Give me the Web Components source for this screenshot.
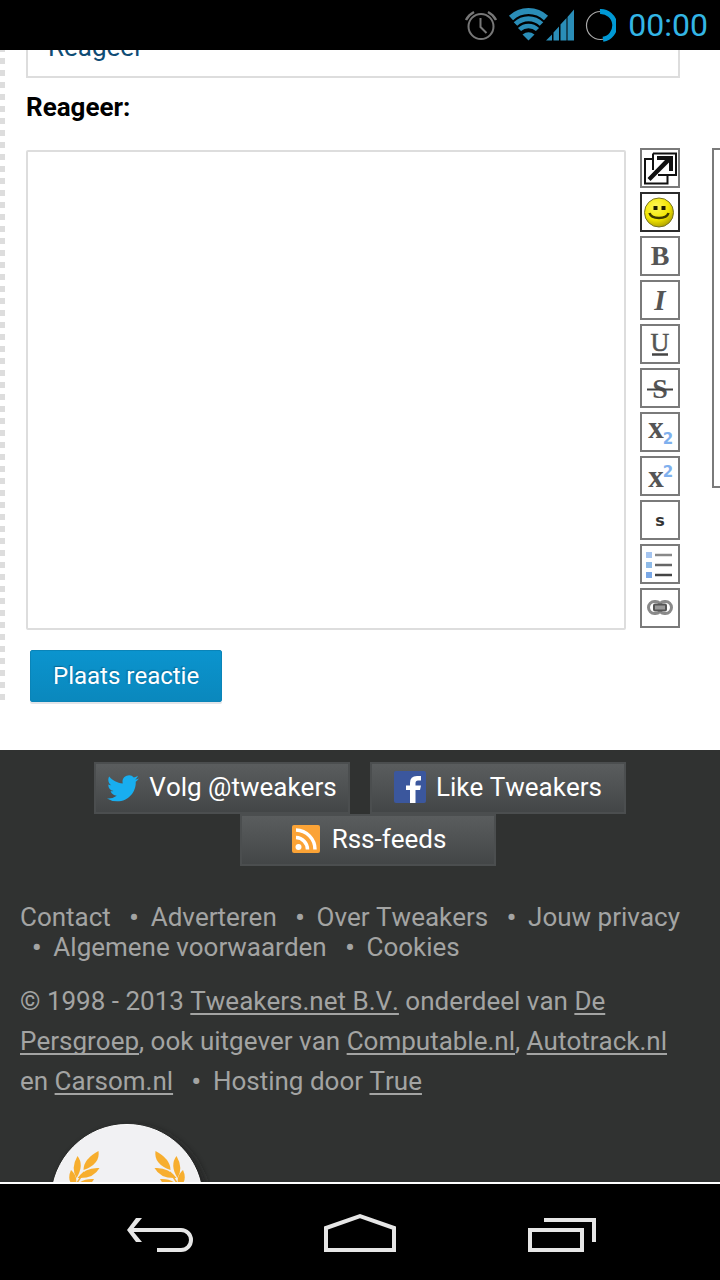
<!DOCTYPE html>
<html lang="nl">
<head>
<meta charset="utf-8">
<meta name="viewport" content="width=device-width, initial-scale=1">
<title>Tweakers</title>
<style>
  body {
    margin: 0;
    font-family: Roboto, "Liberation Sans", sans-serif;
    font-size: 26px;
    font-kerning: none;
  }
</style>
</head>
<body>
<phone-screen>
  <status-bar slot="status">00:00</status-bar>
  <reaction-form></reaction-form>
  <site-footer></site-footer>
  <nav-bar slot="nav"></nav-bar>
</phone-screen>

<script>
class PhoneScreen extends HTMLElement {
  constructor() {
    super();
    this.attachShadow({ mode: 'open' });
  }

  connectedCallback() {
    this.shadowRoot.innerHTML = `
      <style>
        :host {
          display: flex;
          flex-direction: column;
          height: 100vh;
          background: #fff;
        }

        .page {
          flex: 1;
          min-height: 0;
          display: flex;
          flex-direction: column;
          overflow: hidden;
        }
      </style>

      <slot name="status"></slot>
      <div class="page"><slot></slot></div>
      <slot name="nav"></slot>
    `;
  }
}

class StatusBar extends HTMLElement {
  constructor() {
    super();
    this.attachShadow({ mode: 'open' });
  }

  connectedCallback() {
    this.shadowRoot.innerHTML = `
      <style>
        :host {
          display: flex;
          flex: none;
          align-items: center;
          justify-content: flex-end;
          height: 50px;
          padding-right: 12px;
          background: #000;
          color: #33b5e5;
          font-size: 32px;
        }

        svg {
          display: block;
          margin-right: 12px;
        }
      </style>

      <svg width="152" height="50" viewBox="464 0 152 50" aria-hidden="true">
        <g fill="none" stroke="#777" stroke-width="2">
          <circle cx="481" cy="26.500" r="12.500"/>
          <path d="M480.500 18v9l6 6"/>
          <path d="M466 20a19 19 0 0 1 8-8M496 20a19 19 0 0 0-8-8" stroke-width="2.500"/>
        </g>
        <g fill="none" stroke="#2a8db7">
          <path d="M511 18a25.500 25.500 0 0 1 35 0" stroke-width="6"/>
          <path d="M515.500 24a18.500 18.500 0 0 1 26 0" stroke-width="5"/>
          <path d="M519.500 29.500a13 13 0 0 1 18 0" stroke-width="4.500"/>
        </g>
        <path d="M528.500 40.500l-6-6q6-4.500 12 0z" fill="#2a8db7"/>
        <path d="M546 40.500l6-6v6zM553.500 40.500v-8l5.500-6v14zM560.500 40.500v-16l6-6.500v22.500zM567.500 40.500v-23.500l6.500-7.500v31z" fill="#2a8db7"/>
        <circle cx="600.500" cy="25.500" r="14" fill="none" stroke="#aaa" stroke-width="1.200"/>
        <path d="M600 11.500a14 14 0 0 1 3 27.800" fill="none" stroke="#0099d5" stroke-width="5"/>
      </svg>
      <slot></slot>
    `;
  }
}

const icons = {
  popup: `
    <g fill="none" stroke="#111" stroke-width="2">
      <path d="M10 9H3v24.500h22.500V26"/>
      <path d="M11 3.500h23V25H16M11 3.500V20"/>
    </g>
    <path d="M15 6h16v15h-4v-8.500L8.500 31l-3-3L23 10h-8z" fill="#111"/>`,
  smiley: `
    <defs>
      <radialGradient id="face" cx="40%" cy="30%" r="75%">
        <stop offset="0" stop-color="#fff75a"/>
        <stop offset=".6" stop-color="#f2e600"/>
        <stop offset="1" stop-color="#a89a00"/>
      </radialGradient>
    </defs>
    <circle cx="17" cy="18.500" r="14.500" fill="url(#face)" stroke="#777322" stroke-width="1"/>
    <path d="M11.500 12h4v4h-4zM19.500 12h4v4h-4z" fill="#1c1c00"/>
    <path d="M7.500 19q1.500 5 9.500 5t9.500-5" fill="none" stroke="#3d3800" stroke-width="2.500"/>`,
  bold: '<text x="18" y="27" font-size="28">B</text>',
  italic: '<text x="18" y="28" font-size="29" font-style="italic">I</text>',
  underline: `
    <text class="thin" x="18" y="25" font-size="26">U</text>
    <path d="M10 28.500h16" stroke="#444" stroke-width="2.500"/>`,
  strike: `
    <text x="18" y="28" font-size="28">S</text>
    <path d="M5 19.500h26" stroke="#444" stroke-width="2"/>`,
  sub: `
    <text x="14" y="24" font-size="31">x</text>
    <text class="blue" x="26" y="30" font-size="15">2</text>`,
  sup: `
    <text x="14" y="29" font-size="31">x</text>
    <text class="blue" x="26" y="19" font-size="15">2</text>`,
  small: '<text class="small" x="18" y="24" font-size="16">s</text>',
  list: `
    <path d="M4 6h6v6H4z" fill="#a5c5f0"/>
    <path d="M4 16h6v6H4z" fill="#8fbbe8"/>
    <path d="M4 26h6v6H4z" fill="#7aa8e6"/>
    <g stroke-width="2.500">
      <path d="M13 9h17" stroke="#888"/>
      <path d="M13 19h17" stroke="#666"/>
      <path d="M13 29h17" stroke="#444"/>
    </g>`,
  link: `
    <g fill="none" stroke="#8a8a8a" stroke-width="3">
      <rect x="6.500" y="11.500" width="13" height="12" rx="6"/>
      <rect x="16.500" y="11.500" width="13" height="12" rx="6"/>
    </g>
    <rect x="12" y="14.500" width="12" height="6" rx="1" fill="#999" stroke="#555" stroke-width="2"/>`
};

class EditorButton extends HTMLElement {
  constructor() {
    super();
    this.attachShadow({ mode: 'open' });
  }

  connectedCallback() {
    const icon = this.getAttribute('icon');
    const label = this.getAttribute('label');

    this.shadowRoot.innerHTML = `
      <style>
        :host {
          display: block;
        }

        button {
          display: block;
          box-sizing: border-box;
          width: 40px;
          height: 40px;
          padding: 0;
          border: 2px solid var(--tool-border, #7a7a7a);
          background: #fff;
        }

        svg {
          display: block;
          overflow: visible;
        }

        text {
          font-family: "Liberation Serif", serif;
          font-weight: 700;
          fill: #555;
          text-anchor: middle;
        }

        .thin {
          font-weight: 400;
          stroke: #555;
          stroke-width: 0.5;
        }

        .blue {
          font-family: "DejaVu Sans", sans-serif;
          fill: #7fb0ee;
        }

        .small {
          font-family: "DejaVu Sans", sans-serif;
          fill: #333;
        }
      </style>

      <button type="button" aria-label="${label}">
        <svg width="36" height="36" viewBox="0 0 36 36" aria-hidden="true">${icons[icon]}</svg>
      </button>
    `;
  }
}

class ReactionForm extends HTMLElement {
  constructor() {
    super();
    this.attachShadow({ mode: 'open' });
  }

  connectedCallback() {
    this.shadowRoot.innerHTML = `
      <style>
        :host {
          display: block;
          flex: none;
          padding-bottom: 48px;
        }

        form {
          padding-left: 26px;
          background: repeating-linear-gradient(#ddd 0 6px, #fff 6px 12px) 0 -4px / 5px 708px no-repeat;
        }

        /* the page is scrolled, only the bottom of this box is in view */
        .tab {
          display: flex;
          align-items: flex-end;
          height: 28px;
          margin-right: 40px;
          box-sizing: border-box;
          padding: 0 20px 14px;
          border: solid #ddd;
          border-width: 0 2px 2px;
          overflow: hidden;
        }

        .tab a {
          color: #0f4c75;
          line-height: 30px;
          text-decoration: none;
        }

        label {
          display: block;
          padding: 14px 0 26px;
          line-height: 30px;
          font-weight: 700;
          color: #000;
        }

        .editor {
          display: flex;
          align-items: flex-start;
        }

        textarea {
          flex: 1;
          min-width: 0;
          height: 480px;
          box-sizing: border-box;
          margin: 2px 14px 0 0;
          padding: 8px;
          border: 2px solid #ddd;
          border-radius: 2px;
          resize: none;
          font: inherit;
        }

        .tools {
          display: grid;
          gap: 4px;
        }

        .smileys {
          --tool-border: #2b2b2b;
        }

        .panel {
          width: 8px;
          height: 340px;
          box-sizing: border-box;
          margin-left: 32px;
          border: solid #7a7a7a;
          border-width: 2px 0 2px 2px;
        }

        .submit {
          display: block;
          height: 52px;
          margin: 20px 4px 0;
          padding: 0 22px;
          border: 1px solid #0a84b8;
          border-radius: 2px;
          background: linear-gradient(#0b94ce, #0a88bd);
          box-shadow: 0 2px 0 #e2e4e8;
          color: #fff;
          font: inherit;
          font-size: 24px;
          text-shadow: -1px -1px 1px #0a6a96;
        }
      </style>

      <form>
        <div class="tab"><a href="#reageer">Reageer</a></div>
        <label for="reactie">Reageer:</label>
        <div class="editor">
          <textarea id="reactie"></textarea>
          <div class="tools">
            <editor-button icon="popup" label="Vergroot"></editor-button>
            <editor-button class="smileys" icon="smiley" label="Smileys"></editor-button>
            <editor-button icon="bold" label="Vet"></editor-button>
            <editor-button icon="italic" label="Cursief"></editor-button>
            <editor-button icon="underline" label="Onderstreept"></editor-button>
            <editor-button icon="strike" label="Doorgestreept"></editor-button>
            <editor-button icon="sub" label="Subscript"></editor-button>
            <editor-button icon="sup" label="Superscript"></editor-button>
            <editor-button icon="small" label="Klein"></editor-button>
            <editor-button icon="list" label="Lijst"></editor-button>
            <editor-button icon="link" label="Link"></editor-button>
          </div>
          <div class="panel"></div>
        </div>
        <button class="submit" type="button">Plaats reactie</button>
      </form>
    `;
  }
}

class SocialButton extends HTMLElement {
  constructor() {
    super();
    this.attachShadow({ mode: 'open' });
  }

  connectedCallback() {
    this.shadowRoot.innerHTML = `
      <style>
        :host {
          display: block;
          width: 256px;
        }

        a {
          display: flex;
          align-items: center;
          justify-content: center;
          gap: 10px;
          height: 52px;
          box-sizing: border-box;
          padding-bottom: 2px;
          border: 2px solid #4b4e4f;
          background: linear-gradient(#5a5d5e, #434647);
          color: #fff;
          text-decoration: none;
          white-space: nowrap;
        }
      </style>

      <a href="${this.getAttribute('href')}">
        <slot name="icon"></slot>
        <span><slot></slot></span>
      </a>
    `;
  }
}

class SiteFooter extends HTMLElement {
  constructor() {
    super();
    this.attachShadow({ mode: 'open' });
  }

  connectedCallback() {
    this.shadowRoot.innerHTML = `
      <style>
        :host {
          display: block;
          flex: 1;
          min-height: 0;
          padding: 12px 20px 0;
          border-bottom: 2px solid #fff;
          background: #303231;
          color: #a3a4a3;
          overflow: hidden;
        }

        .social {
          display: flex;
          justify-content: center;
          gap: 20px;
        }

        .feeds {
          padding-left: 16px;
        }

        .social svg {
          display: block;
        }

        ul {
          margin: 36px 0 0;
          padding: 0;
          list-style: none;
          line-height: 30px;
        }

        li {
          display: inline-block;
        }

        li + li::before,
        .dot::before {
          content: "•";
          margin: 0 12px;
          font-weight: 700;
        }

        ul a {
          color: inherit;
          text-decoration: none;
        }

        p {
          margin: 19px 24px 0 0;
          line-height: 40px;
        }

        p a {
          color: inherit;
          text-decoration: underline 2px;
          text-decoration-skip-ink: none;
          text-underline-offset: 3px;
        }

        .award {
          display: block;
          margin: 19px 0 0 24px;
        }
      </style>

      <div class="social">
        <social-button href="#twitter">
          <svg slot="icon" width="32" height="32" viewBox="0 0 24 24" aria-hidden="true">
            <path transform="translate(0 1)" fill="#18aeef" d="M23.953 4.570a10 10 0 01-2.825.775 4.958 4.958 0 002.163-2.723c-.951.555-2.005.959-3.127 1.184a4.920 4.920 0 00-8.384 4.482C7.690 8.095 4.067 6.130 1.640 3.162a4.822 4.822 0 00-.666 2.475c0 1.710.870 3.213 2.188 4.096a4.904 4.904 0 01-2.228-.616v.060a4.923 4.923 0 003.946 4.827 4.996 4.996 0 01-2.212.085 4.936 4.936 0 004.604 3.417 9.867 9.867 0 01-6.102 2.105c-.390 0-.779-.023-1.170-.067a13.995 13.995 0 007.557 2.209c9.053 0 13.998-7.496 13.998-13.985 0-.210 0-.420-.015-.630A9.935 9.935 0 0024 4.590z"/>
          </svg>
          Volg @tweakers
        </social-button>
        <social-button href="#facebook">
          <svg slot="icon" width="32" height="32" viewBox="0 0 32 32" aria-hidden="true">
            <rect width="32" height="32" rx="2" fill="#3b579d"/>
            <path d="M16 32V19h-4v-4.500h4V12q0-7 7-7h4v4.500h-3q-2.500 0-2.500 2.500v2.500h5.500l-1 4.500h-4.500v13z" fill="#fff"/>
          </svg>
          Like Tweakers
        </social-button>
      </div>
      <div class="social feeds">
        <social-button href="#rss">
          <svg slot="icon" width="32" height="32" viewBox="0 0 32 32" aria-hidden="true">
            <rect x="2" y="2" width="28" height="28" rx="2" fill="#fba336"/>
            <circle cx="8.500" cy="24" r="3" fill="#fff"/>
            <path d="M6 14.500a12 12 0 0 1 11.500 12M6 7a19.500 19.500 0 0 1 19 19.500" fill="none" stroke="#fff" stroke-width="3.500"/>
          </svg>
          Rss-feeds
        </social-button>
      </div>

      <ul>
        <li><a href="#contact">Contact</a></li>
        <li><a href="#adverteren">Adverteren</a></li>
        <li><a href="#over">Over Tweakers</a></li>
        <li><a href="#privacy">Jouw privacy</a></li>
        <li><a href="#voorwaarden">Algemene voorwaarden</a></li>
        <li><a href="#cookies">Cookies</a></li>
      </ul>

      <p>
        © 1998 - 2013 <a href="#tweakers">Tweakers.net B.V.</a> onderdeel van
        <a href="#persgroep">De Persgroep</a>, ook uitgever van
        <a href="#computable">Computable.nl</a>, <a href="#autotrack">Autotrack.nl</a>
        en <a href="#carsom">Carsom.nl</a> <span class="dot">Hosting</span> door <a href="#true">True</a>
      </p>

      <svg class="award" width="166" height="160" viewBox="44 1120 166 160" aria-hidden="true">
        <defs>
          <filter id="soft" x="-20%" y="-20%" width="140%" height="140%">
            <feGaussianBlur stdDeviation="4"/>
          </filter>
          <g id="laurel" fill="#f7ae2e">
            <path d="M98.500 1151q2 13-15 19q0-11 15-19z"/>
            <path d="M77.500 1156q7 9-1 22q-6-10 1-22z"/>
            <path d="M99.500 1168q-6 11-22 10q8-11 22-10z"/>
            <path d="M71 1170q8 7 4 17q-9-6-4-17z"/>
            <path d="M94 1179q-5 10-20 10q6-11 20-10z"/>
            <path d="M84 1172l-9 14" stroke="#f7ae2e" stroke-width="1.500"/>
          </g>
        </defs>
        <circle cx="131" cy="1204" r="76" fill="#222" filter="url(#soft)"/>
        <circle cx="127" cy="1200" r="75.500" fill="#f1f1f3" stroke="#fff" stroke-width="1"/>
        <use href="#laurel"/>
        <use href="#laurel" transform="matrix(-1 0 0 1 254 0)"/>
      </svg>
    `;
  }
}

class NavBar extends HTMLElement {
  constructor() {
    super();
    this.attachShadow({ mode: 'open' });
  }

  connectedCallback() {
    this.shadowRoot.innerHTML = `
      <style>
        :host {
          display: flex;
          flex: none;
          justify-content: center;
          height: 96px;
          background: #000;
        }

        button {
          flex: 0 1 200px;
          padding: 0;
          border: 0;
          background: none;
        }

        svg {
          display: block;
          margin: 0 auto;
          fill: none;
          stroke: #e6e6e6;
          stroke-width: 4;
        }
      </style>

      <button type="button" aria-label="Terug">
        <svg width="80" height="96" viewBox="120 1184 80 96">
          <path d="M130 1230h51a10 10 0 0 1 0 20h-24"/>
          <path d="M136 1218h6l-10 12 10 12h-6l-9-12z" fill="#e6e6e6" stroke="none"/>
        </svg>
      </button>
      <button type="button" aria-label="Startscherm">
        <svg width="80" height="96" viewBox="320 1184 80 96">
          <path d="M326 1250v-22l34-12 34 12v22z"/>
        </svg>
      </button>
      <button type="button" aria-label="Recente apps">
        <svg width="80" height="96" viewBox="520 1184 80 96">
          <path d="M530 1230h52v20h-52zM544 1220h50v22"/>
        </svg>
      </button>
    `;
  }
}

customElements.define('phone-screen', PhoneScreen);
customElements.define('status-bar', StatusBar);
customElements.define('editor-button', EditorButton);
customElements.define('reaction-form', ReactionForm);
customElements.define('social-button', SocialButton);
customElements.define('site-footer', SiteFooter);
customElements.define('nav-bar', NavBar);
</script>
</body>
</html>
